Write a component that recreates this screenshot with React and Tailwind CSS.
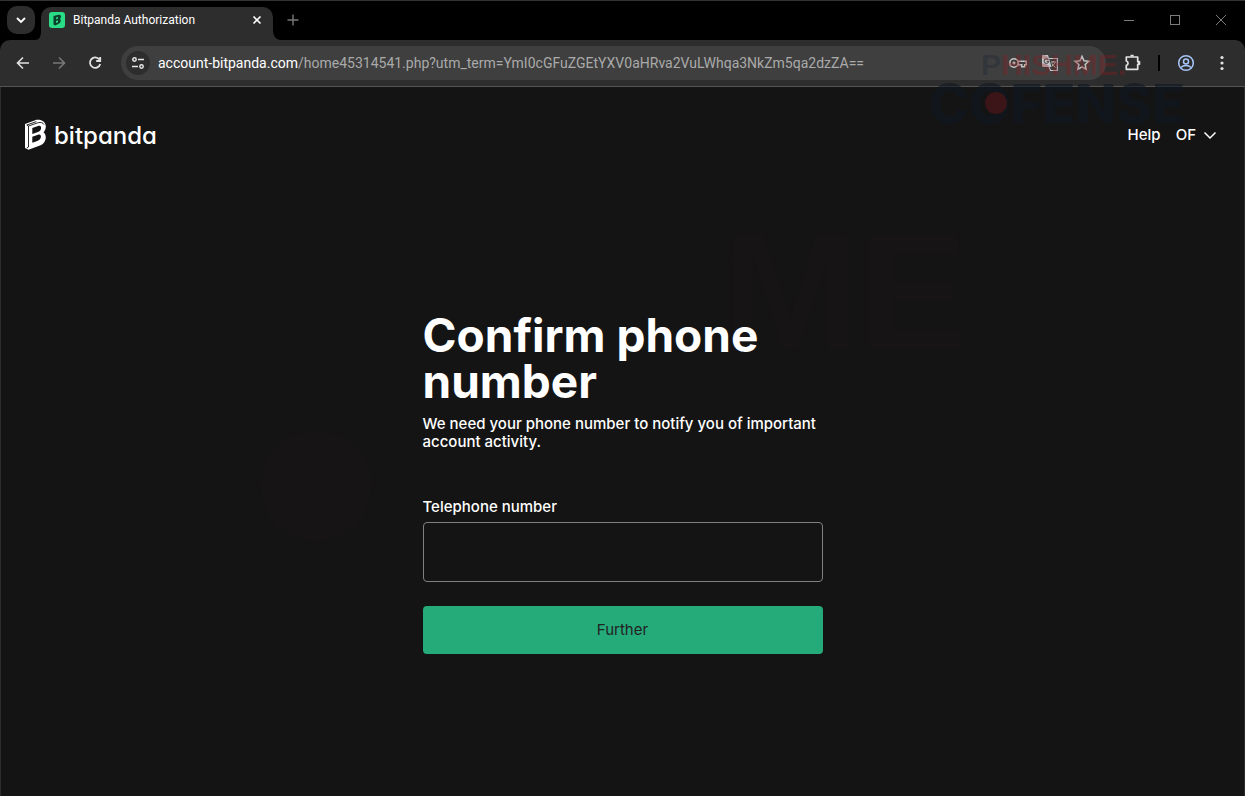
import React from "react";

function Svg({ size = 20, children, className = "" }) {
  return (
    <svg
      width={size}
      height={size}
      viewBox={`0 0 ${size} ${size}`}
      fill="none"
      stroke="currentColor"
      strokeWidth="1.6"
      className={"shrink-0 " + className}
      aria-hidden="true"
    >
      {children}
    </svg>
  );
}

function TabStrip() {
  return (
    <header className="flex h-10 items-start border-t border-[#333333] bg-black pl-[7px]">
      <button aria-label="Search tabs" className="mt-[5px] flex size-7 items-center justify-center rounded-[10px] bg-[#2d2d2d] text-white">
        <Svg size={12}>
          <path d="M2 4l4 4 4-4" strokeWidth="1.8" />
        </Svg>
      </button>
      <div className="flex self-end">
        <svg width="6" height="33" viewBox="0 0 6 33" aria-hidden="true">
          <path d="M6 24v9H0c4 0 6-3 6-9z" fill="#2d2d2d" />
        </svg>
        <div className="flex h-[33px] w-[232px] items-center rounded-t-[10px] bg-[#2d2d2d] pr-[10px] pb-[7px] pl-2 text-white">
          <svg width="16" height="16" viewBox="0 0 16 16" aria-hidden="true" className="shrink-0">
            <rect width="16" height="16" rx="3" fill="#2bdc86" />
            <path d="M4.500 4l5-1.300c2.300-.3 3 1.300 2.300 2.700l-.8 1.600c1.400 1 .9 3.600-.9 4.600l-3.800 1.800-1.800-.8z" fill="#0b3f2b" />
            <path d="M7 5.500l2-.6v1.700l-2 .7zM7 9l2-.7v2L7 11z" fill="#2bdc86" />
          </svg>
          <span className="ml-2 grow font-['Roboto','Noto_Sans',sans-serif] text-xs leading-4">Bitpanda Authorization</span>
          <button aria-label="Close tab">
            <Svg size={12}>
              <path d="M2.500 2.500l7 7M9.500 2.500l-7 7" />
            </Svg>
          </button>
        </div>
        <svg width="8" height="33" viewBox="0 0 8 33" aria-hidden="true">
          <path d="M0 23v10h8c-5 0-8-4-8-10z" fill="#2d2d2d" />
        </svg>
      </div>
      <button aria-label="New tab" className="mt-3 ml-[5px] text-[#777777]">
        <Svg size={14}>
          <path d="M7 1.500v11M1.500 7h11" strokeWidth="1.400" />
        </Svg>
      </button>
      <div className="mt-3 mr-[17px] ml-auto flex gap-8 text-[#7c7c7c]">
        <button aria-label="Minimize">
          <Svg size={14}>
            <path d="M2 7.500h10" strokeWidth="1" />
          </Svg>
        </button>
        <button aria-label="Maximize">
          <Svg size={14}>
            <rect x="2.500" y="2.500" width="9" height="9" strokeWidth="1" />
          </Svg>
        </button>
        <button aria-label="Close window">
          <Svg size={14}>
            <path d="M2 2l10 10M12 2L2 12" strokeWidth="1" />
          </Svg>
        </button>
      </div>
    </header>
  );
}

function Toolbar() {
  return (
    <div className="bg-black">
      <div className="flex h-[47px] items-center rounded-t-[10px] border-b border-[#555555] bg-[#2d2d2d] pr-[13px] pl-[13px]">
        <nav className="flex gap-4 text-[#e2e2e2]">
          <button aria-label="Back">
            <Svg>
              <path d="M16 10H4.500M10 4.500L4.500 10l5.500 5.500" />
            </Svg>
          </button>
          <button aria-label="Forward" className="text-[#777777]">
            <Svg>
              <path d="M4 10h11.500M10 4.500l5.500 5.500-5.500 5.500" />
            </Svg>
          </button>
          <button aria-label="Reload">
            <Svg>
              <path d="M14.300 6.500A5.200 5.200 0 1 0 15.200 11M15.200 4v4h-4" strokeWidth="1.800" />
            </Svg>
          </button>
        </nav>
        <div className="ml-4 flex h-[34px] grow items-center rounded-full bg-[#3f3f3f] pr-[14px] pl-[5px]">
          <button aria-label="View site information" className="flex size-6 items-center justify-center rounded-full bg-[#2d2d2d] text-[#e6e6e6]">
            <Svg size={14}>
              <circle cx="3.500" cy="3.500" r="1.700" strokeWidth="1.500" />
              <path d="M7 3.500h6M1 10.500h6" />
              <circle cx="10.500" cy="10.500" r="1.700" strokeWidth="1.500" />
            </Svg>
          </button>
          <div className="ml-2 grow font-['Roboto','Noto_Sans',sans-serif] text-sm leading-5 whitespace-nowrap text-[#aaaaaa]">
            <span className="text-white">account-bitpanda.com</span>/home45314541.php?utm_term=YmI0cGFuZGEtYXV0aHRva2VuLWhqa3NkZm5qa2dzZA==
          </div>
          <div className="flex gap-3 text-[#c6c6c6]">
            <button aria-label="Passwords">
              <Svg>
                <circle cx="6" cy="10" r="4.200" />
                <circle cx="6" cy="10" r="1.600" fill="currentColor" stroke="none" />
                <path d="M10 8.300h8.200v3.400h-1.500v2h-3v-2H10" strokeWidth="1.500" />
              </Svg>
            </button>
            <button aria-label="Translate this page">
              <Svg>
                <path d="M8 5.500h9.300v12H10.500L9 14" strokeWidth="1.200" />
                <path d="M2 2h6l3.500 12H3.500A1.500 1.500 0 0 1 2 12.500z" fill="currentColor" stroke="none" />
                <path d="M8.200 6.600A2.300 2.300 0 1 0 8.700 8.300H6.700" stroke="#555" strokeWidth="1.200" />
                <path d="M11 9h5M13.500 8v1M15 9c-.5 2-2 3.500-3 4.300M12 10.500c.7 1.500 2 2.500 3.500 4" strokeWidth="1" />
              </Svg>
            </button>
            <button aria-label="Bookmark this tab">
              <Svg>
                <path d="M10 3.300l2 4.500 4.800.5-3.600 3.200 1 4.800-4.200-2.500-4.200 2.500 1-4.800-3.600-3.200 4.800-.5z" strokeWidth="1.500" />
              </Svg>
            </button>
          </div>
        </div>
        <button aria-label="Extensions" className="ml-[17px] text-[#e2e2e2]">
          <Svg>
            <path d="M3.300 4h11.400v4.700h1.300v2.600h-1.300v5H3.300v-4a2.200 2.200 0 0 0 0-4.300z" strokeWidth="1.700" strokeLinejoin="round" />
            <path d="M7.500 3.500V1.800h3.200v1.700M15 8.300h2.300v3.400H15z" fill="currentColor" stroke="none" />
          </Svg>
        </button>
        <div className="ml-[15px] h-4 w-[2px] bg-black" />
        <button aria-label="Profile" className="ml-4 text-[#a8c7fa]">
          <Svg>
            <circle cx="10" cy="10" r="7.300" strokeWidth="1.500" />
            <circle cx="10" cy="8.500" r="2.500" strokeWidth="1.500" />
            <path d="M4.700 14.500c3-2.700 7.600-2.700 10.600 0" strokeWidth="1.500" />
          </Svg>
        </button>
        <button aria-label="Menu" className="ml-4 text-[#e2e2e2]">
          <Svg>
            <g fill="currentColor" stroke="none">
              <circle cx="10" cy="4.500" r="1.600" />
              <circle cx="10" cy="10" r="1.600" />
              <circle cx="10" cy="15.500" r="1.600" />
            </g>
          </Svg>
        </button>
      </div>
    </div>
  );
}

function Logo() {
  return (
    <a href="#home" className="flex items-center gap-[6px] text-white">
      <svg width="24" height="32" viewBox="0 0 24 32" aria-hidden="true">
        <path
          d="M1 5L12.500 .8c4.500-.9 9.500 1.900 9.300 6.900-.1 2.300-1 4.100-2.300 5.600 2 1.700 2.600 4.200 2.100 6.700-.6 3-2.300 5-5 6.200L4.500 30.800 1 29z"
          fill="white"
        />
        <path
          d="M4.500 28V7l9.700-3.300c2.800-.7 4.800 0 5.800 1.900M4.500 28l-1.700 1M4.500 7L2.800 6l9.500-3.400"
          fill="none"
          stroke="#141414"
          strokeWidth="0.900"
        />
        <path d="M8.300 9l5.700-2c2.500-.6 3.500.8 3 2.700-.4 1.700-1.400 2.600-3 3.200l-5.700 2.100zM8.300 17.700l5.700-2c2.500-.6 3.300.9 2.800 2.900-.4 1.600-1.400 2.500-2.900 3.100l-5.600 2.100z" fill="#141414" />
      </svg>
      <span className="pt-[2px] font-['Inter',sans-serif] text-2xl leading-8 font-medium [font-feature-settings:'cv11']">bitpanda</span>
    </a>
  );
}

function Watermarks() {
  return (
    <div aria-hidden="true" className="pointer-events-none absolute inset-0 overflow-hidden font-['Inter',sans-serif] whitespace-nowrap select-none">
      <span className="absolute top-[50px] right-[119px] font-['Liberation_Sans',sans-serif] text-[30px] leading-[30px] font-bold text-[#8b1a1f]/35">
        <span className="text-[#1c2433]/35">P</span>HISHME.
      </span>
      <span className="absolute top-[85px] right-[60px] text-[54px] leading-[38px] font-extrabold text-[#0f1722]/60">COFENSE</span>
      <span className="absolute top-[92px] right-[238px] size-[22px] rounded-full bg-[#3b1518]" />
      <span className="absolute top-[192px] left-[722px] font-['Liberation_Sans',sans-serif] text-[164px] leading-[200px] font-bold text-[#171415]">ME</span>
      <span className="absolute top-[431px] left-[261px] size-[110px] rounded-full bg-[#171415]" />
    </div>
  );
}

export default function App() {
  return (
    <div className="relative isolate flex min-h-screen flex-col bg-[#141414] font-['Inter',sans-serif] text-white">
      <TabStrip />
      <Toolbar />
      <div className="flex items-center justify-between border-x border-[#2d2d2d] pt-[31px] pr-[27px] pl-[23px]">
        <Logo />
        <nav className="flex items-center gap-[15px] text-[15px] leading-5 font-medium">
          <a href="#help">Help</a>
          <button className="flex items-center gap-[7px]">
            OF
            <Svg size={14}>
              <path d="M1.500 4.500L7 10l5.500-5.500" strokeWidth="1.500" />
            </Svg>
          </button>
        </nav>
      </div>
      <main className="z-10 flex grow justify-center border-x border-[#2d2d2d] pt-[160px] pb-10">
        <form className="flex w-[400px] flex-col" onSubmit={(e) => e.preventDefault()}>
          <h1 className="text-[46px] leading-[46px] font-bold">Confirm phone number</h1>
          <p className="mt-[11px] text-[15px] leading-[18px] font-medium">We need your phone number to notify you of important account activity.</p>
          <label htmlFor="telephone" className="mt-[47px] text-[15px] leading-[18px] font-medium">
            Telephone number
          </label>
          <input id="telephone" type="tel" className="mt-[6px] h-[60px] rounded-[4px] border border-[#808080] bg-transparent px-4 text-base" />
          <button className="mt-6 h-12 rounded-[4px] bg-[#25ab7a] text-[15px] leading-5 text-[#222222]">Further</button>
        </form>
      </main>
      <Watermarks />
    </div>
  );
}
